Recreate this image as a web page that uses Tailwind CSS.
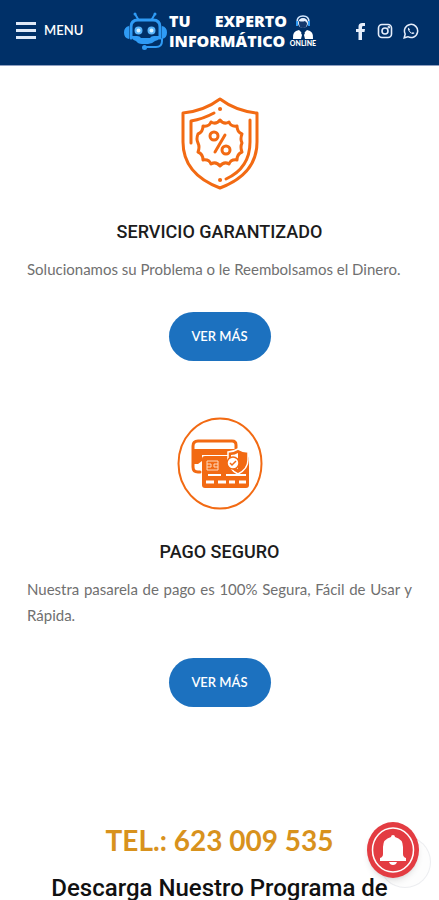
<!DOCTYPE html>
<html lang="es">
<head>
  <meta charset="UTF-8">
  <title>Tu Experto Informático Online</title>
  <meta name="viewport" content="width=device-width, initial-scale=1">
  <!-- Tailwind CSS CDN -->
  <script src="https://cdn.jsdelivr.net/npm/@tailwindcss/browser@4"></script>
</head>
<body class="flex h-screen flex-col overflow-hidden bg-white font-['Lato',sans-serif]">

<!-- Header -->
<header class="flex h-[66px] shrink-0 items-center justify-between border-b border-[#8f9fc0] bg-[#003068] pr-5 pl-4 pb-1 text-white">
  <button type="button" class="flex w-[94px] items-center gap-2 text-[13px] font-semibold">
    <svg class="h-[18px] w-5" viewBox="0 0 20 18" fill="#dfe9f8" aria-hidden="true">
      <path d="M0 0h20v3H0zM0 7h20v3H0zM0 14h20v3H0z"/>
    </svg>
    MENU
  </button>

  <a href="#" class="flex items-center gap-[2px]">
    <!-- Robot -->
    <svg class="h-10 w-[43px]" viewBox="0 0 43 40" fill="none" stroke="#2f9bf5" stroke-width="2" stroke-linecap="round" aria-hidden="true">
      <path d="M14 8 11 3M28 8l3-5"/>
      <circle cx="11" cy="3" r="1.500" fill="#2f9bf5" stroke="none"/>
      <circle cx="31" cy="3" r="1.500" fill="#2f9bf5" stroke="none"/>
      <path d="M7 27v-11q0-7 7-7h15q7 0 7 7v11" stroke-width="3"/>
      <path d="M5 15q-5 1-5 6.500t5 6.500zM38 15q5 1 5 6.500t-5 6.500z" fill="#2f9bf5" stroke="none"/>
      <circle cx="14.500" cy="19.500" r="3" fill="#d8f0ff" stroke="#58b4fa"/>
      <circle cx="27.500" cy="19.500" r="3" fill="#d8f0ff" stroke="#58b4fa"/>
      <path d="M7 25h6q3 0 4 2h9q1-2 4-2h7q-1 4-6 5-3 3-7 3h-6q-4 0-6-3-4-1-5-5z" fill="#2f9bf5" stroke="none"/>
      <path d="M38 28v2q0 6-6 6H21"/>
      <circle cx="20.500" cy="36.500" r="2.500" fill="#2f9bf5" stroke="none"/>
    </svg>
    <span class="w-[118px] font-['Open_Sans',sans-serif] text-base leading-5 font-extrabold">
      <span class="flex justify-between"><span>TU</span><span>EXPERTO</span></span>
      <span class="block">INFORMÁTICO</span>
    </span>
    <!-- Technician -->
    <span class="flex w-7 flex-col items-center">
      <svg class="h-6 w-6" viewBox="0 0 24 24" aria-hidden="true">
        <path d="M2 24q-1-8 6-9l4 4 4-4q7 1 6 9z" fill="#fff"/>
        <path d="m12 16 2 2-1 2 1 4h-4l1-4-1-2z" fill="#003068"/>
        <circle cx="12" cy="8" r="5" fill="#e8f2ff"/>
        <path d="M8 8q0 5 4 5t4-5l-2-2q-3 1-6 0z" fill="#14386c"/>
        <path d="M6 8V7q0-6 6-6t6 6v1" fill="none" stroke="#d5e9ff" stroke-width="1.500"/>
        <path d="M5 6h2v5H5zM17 6h2v5h-2z" fill="#2f9bf5"/>
      </svg>
      <span class="text-[7px] leading-2 font-black">ONLINE</span>
    </span>
  </a>

  <nav class="flex w-[88px] items-center justify-end gap-[10px]">
    <a href="#" aria-label="Facebook">
      <svg class="h-[18px] w-3" viewBox="0 0 12 18" fill="#e6eefb"><path d="M3.500 18v-8H1V7h2.500V4.500Q3.500 1 7.300 1H10v3H8.200Q7 4 7 5.200V7h3l-.5 3H7v8z"/></svg>
    </a>
    <a href="#" aria-label="Instagram">
      <svg class="size-4" viewBox="0 0 16 16" fill="none" stroke="#e6eefb" stroke-width="1.600"><rect x="1.500" y="1.500" width="13" height="13" rx="3.500"/><circle cx="8" cy="8" r="3"/><circle cx="11.800" cy="4.200" r=".5"/></svg>
    </a>
    <a href="#" aria-label="WhatsApp">
      <svg class="size-4" viewBox="0 0 16 16" fill="none" stroke="#e6eefb" stroke-width="1.500"><path d="m1.200 14.800 1-3.800a6.600 6.600 0 1 1 2.600 2.700z"/><path d="M5.300 4.500q-1 1.200.2 3.300 1.600 2.700 4 3.200 1.300.2 2-.9L9.800 9l-.8.900Q7 9 6.300 7.200l.7-.8z" fill="#e6eefb" stroke="none"/></svg>
    </a>
  </nav>
</header>

<main class="flex-1 overflow-y-auto px-[27px] pt-[31px] text-center [scrollbar-width:none]">
  <!-- Services -->
  <section class="flex flex-col items-center">
    <svg class="h-[93px] w-20" viewBox="0 0 80 93" fill="none" stroke="#f26a13" stroke-width="3" stroke-linecap="round" stroke-linejoin="round" aria-hidden="true">
      <path d="M40 2Q24 14 3 16v29q0 32 37 46 37-14 37-46V16Q56 14 40 2z"/>
      <path d="M11 46V24q12-2 23-8M70 23v22q0 26-24 37"/>
      <path d="M40 12h.1M40 83h.1" stroke-width="4"/>
      <path d="M40 23q4 5 9 2 2 5 8 4 0 6 5 8-2 5 0 9-2 4 0 9-5 2-5 8-6-1-8 4-5-3-9 2-4-5-9-2-2-5-8-4 0-6-5-8 2-5 0-9-2-4 0-9 5-2 5-8 6 1 8-4 5 3 9-2z"/>
      <circle cx="34" cy="39" r="4"/>
      <circle cx="46" cy="53" r="4"/>
      <path d="m45 38-10 17"/>
    </svg>
    <h3 class="mt-7 font-['Roboto',sans-serif] text-lg leading-7 font-medium text-[#1c1c1c]">SERVICIO GARANTIZADO</h3>
    <p class="mt-[10px] w-full text-justify text-[15px] leading-[26px] text-[#707070]">Solucionamos su Problema o le Reembolsamos el Dinero.</p>
    <a href="#" class="mt-[30px] flex h-[49px] w-[102px] items-center justify-center rounded-full bg-[#1c71bf] text-[13px] font-semibold text-white">VER MÁS</a>
  </section>

  <section class="mt-14 flex flex-col items-center">
    <svg class="h-[93px] w-[86px]" viewBox="0 0 86 93" fill="none" stroke="#f26a13" aria-hidden="true">
      <ellipse cx="43" cy="46.500" rx="41.500" ry="45" stroke-width="2"/>
      <path d="M23 55h-2q-5 0-5-5V29q0-5 5-5h34q4 0 4 4v7" stroke-width="3" stroke-linecap="round"/>
      <path d="M15 32h44v6H25v6l-4 3h-6z" fill="#f26a13" stroke="none"/>
      <path d="M18 27h39v5H18z" fill="#fff" stroke="none"/>
      <rect x="25" y="39" width="47" height="32" rx="3" fill="#f26a13" stroke="none"/>
      <path d="M30 44h11v9H30zM30 47h4v3h-4M41 47h-4v3h4" stroke="#ffd9bd" stroke-width="1"/>
      <path d="M31 58h13M49 58h20" stroke="#fff" stroke-width="2"/>
      <path d="M29 65h8M41 65h8M52 65h6M62 65h7" stroke="#fff" stroke-width="3"/>
      <path d="M61 32q5 3 10 3v8q0 9-10 14-10-5-10-14v-8q5 0 10-3z" fill="#f26a13" stroke="#fff" stroke-width="1.500"/>
      <path d="M61 36v16q-6-3-7-9v-5q4 0 7-2z" fill="#fff" stroke="none"/>
      <circle cx="56" cy="46" r="6" fill="#fff" stroke-width="1.500"/>
      <path d="m53 46 2 2 4-4" stroke-width="1.500"/>
    </svg>
    <h3 class="mt-7 font-['Roboto',sans-serif] text-lg leading-7 font-medium text-[#1c1c1c]">PAGO SEGURO</h3>
    <p class="mt-[10px] w-full text-justify text-[15px] leading-[26px] text-[#707070]">Nuestra pasarela de pago es 100% Segura, Fácil de Usar y Rápida.</p>
    <a href="#" class="mt-[30px] flex h-[49px] w-[102px] items-center justify-center rounded-full bg-[#1c71bf] text-[13px] font-semibold text-white">VER MÁS</a>
  </section>

  <!-- Contact and download -->
  <section class="mt-[115px]">
    <a href="tel:623009535" class="block text-[28px] leading-9 font-bold text-[#d8921d]">TEL.: 623 009 535</a>
    <h2 class="mt-[14px] font-['Roboto',sans-serif] text-2xl leading-8 font-medium text-[#111]">Descarga Nuestro Programa de</h2>
  </section>
</main>

<!-- Floating buttons -->
<div class="fixed right-2 bottom-3 size-[52px] rounded-full border border-gray-200/70 bg-gray-100/20"></div>
<button type="button" aria-label="Notificaciones" class="fixed right-5 bottom-[22px] h-14 w-[52px] rounded-[50%] bg-[#e33c42] shadow-md">
  <svg class="h-14 w-[52px]" viewBox="0 0 52 56" aria-hidden="true">
    <ellipse cx="26" cy="28" rx="20.500" ry="22" fill="none" stroke="#fff" stroke-width="1.500"/>
    <path d="M26 13q2 0 2 2 8 2 8 10v7q0 3 3 4v3H13v-3q3-1 3-4v-7q0-8 8-10 0-2 2-2zM22 40h8q-1 3-4 3t-4-3z" fill="#fff"/>
  </svg>
</button>

</body>
</html>
